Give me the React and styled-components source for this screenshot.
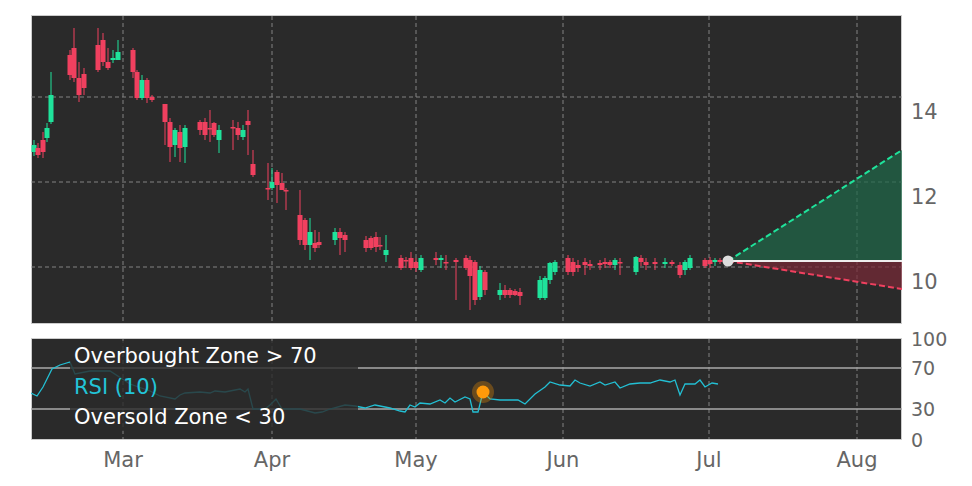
import React from 'react';
import styled, { createGlobalStyle } from 'styled-components';

const Global = createGlobalStyle`
  body { margin: 0; background: #fff; font-family: "DejaVu Sans", sans-serif; }
`;

const Page = styled.div`
  width: 972px;
  height: 486px;
  padding: 15px 0 0 31px;
  box-sizing: border-box;
  display: flex;
  flex-direction: column;
  gap: 14px;
`;

const Row = styled.div`
  display: flex;
  height: ${(p) => p.h}px;
`;

const Panel = styled.svg`
  width: 871px;
  height: ${(p) => p.h}px;
  display: block;
  flex: none;
`;

const Axis = styled.div`
  position: relative;
  flex: 1;
`;

const Tick = styled.span`
  position: absolute;
  left: 9px;
  transform: translateY(-50%);
  font-size: ${(p) => p.size}px;
  color: #666;
  line-height: 1;
`;

const Months = styled.div`
  position: relative;
  height: 40px;
  margin-top: -6px;
`;

const Month = styled.span`
  position: absolute;
  top: 0;
  transform: translateX(-50%);
  font-size: 21px;
  color: #666;
`;

const GREEN = '#1fe39b';
const RED = '#f0405f';
const vx = [123, 272, 416, 563, 709, 857];

// [x, open, close, high, low] in page y coords
const candles = [
  [34, 152, 145, 140, 156], [38, 148, 155, 143, 158], [43, 140, 152, 132, 158], [47, 138, 128, 123, 142], [51, 122, 95, 72, 124],
  [70, 55, 75, 50, 80], [74, 48, 78, 28, 82], [79, 78, 95, 62, 102], [84, 74, 88, 68, 95],
  [98, 45, 70, 28, 72], [103, 40, 62, 33, 66], [108, 62, 68, 48, 70], [113, 60, 58, 50, 63], [118, 60, 52, 40, 60],
  [133, 50, 72, 48, 78], [137, 72, 98, 70, 100], [142, 98, 80, 75, 100], [147, 80, 98, 78, 103], [152, 97, 100, 95, 102],
  [165, 104, 122, 104, 145], [170, 122, 147, 118, 162], [175, 145, 130, 128, 157], [180, 132, 148, 125, 162], [185, 147, 128, 125, 163],
  [200, 122, 130, 120, 135], [205, 122, 135, 118, 140], [210, 128, 128, 110, 142], [214, 123, 135, 122, 137], [219, 140, 130, 125, 153],
  [233, 127, 127, 120, 150], [238, 128, 135, 122, 140], [243, 137, 130, 125, 140], [248, 121, 125, 110, 155],
  [253, 164, 175, 150, 177],
  [268, 188, 188, 163, 200], [272, 188, 182, 168, 190], [277, 172, 185, 170, 203], [282, 183, 190, 173, 190], [286, 190, 190, 188, 210],
  [300, 215, 240, 190, 245], [305, 220, 245, 218, 250], [310, 245, 232, 218, 260], [315, 243, 248, 230, 252], [319, 242, 245, 232, 248],
  [335, 240, 232, 228, 245], [340, 232, 238, 228, 255], [345, 235, 240, 232, 252],
  [366, 240, 248, 236, 252], [371, 238, 248, 236, 250], [376, 237, 247, 232, 252], [380, 245, 246, 237, 250],
  [386, 255, 250, 235, 262], [401, 258, 268, 255, 270], [406, 260, 260, 257, 268], [411, 258, 268, 252, 270], [416, 262, 268, 258, 272], [421, 270, 258, 255, 272],
  [436, 258, 260, 252, 265], [441, 260, 258, 255, 268], [446, 262, 262, 255, 270], [456, 260, 262, 258, 300],
  [466, 258, 268, 255, 270], [470, 260, 276, 256, 310], [475, 262, 300, 260, 305], [480, 297, 270, 266, 300], [485, 272, 290, 270, 295],
  [500, 295, 290, 283, 300], [505, 290, 295, 285, 298], [510, 290, 295, 288, 298], [515, 291, 295, 289, 296], [520, 292, 296, 288, 305],
  [540, 298, 280, 276, 300], [545, 298, 278, 276, 300], [550, 280, 263, 262, 284], [555, 272, 262, 260, 275],
  [568, 258, 272, 255, 275], [573, 262, 272, 258, 276], [578, 265, 268, 260, 272], [585, 262, 265, 258, 275], [590, 264, 266, 260, 270],
  [600, 263, 265, 260, 270], [605, 262, 264, 258, 268], [610, 262, 265, 260, 268], [615, 265, 260, 258, 270], [620, 262, 263, 258, 275],
  [636, 272, 257, 256, 275], [641, 258, 262, 255, 266], [646, 262, 265, 258, 270], [655, 262, 264, 258, 270], [665, 264, 262, 258, 268],
  [672, 262, 264, 260, 266], [680, 265, 275, 262, 278], [685, 270, 262, 260, 275], [690, 268, 258, 255, 270],
  [705, 260, 266, 258, 268], [710, 260, 264, 257, 268], [715, 262, 260, 258, 266], [720, 260, 262, 258, 264],
];

const rsi = [[31,394],[37,397],[43,388],[52,370],[60,366],[70,363],[75,375],[90,372],[110,372],[130,385],[150,392],[160,397],[175,400],[180,396],[185,394],[200,393],[210,394],[215,392],[225,393],[240,390],[245,393],[248,390],[253,410],[265,410],[270,406],[276,400],[282,410],[300,410],[315,414],[322,413],[330,410],[345,406],[355,407],[365,409],[375,406],[390,409],[400,412],[405,413],[410,406],[415,408],[420,404],[430,405],[440,401],[445,404],[450,399],[455,403],[465,398],[470,400],[473,413],[478,413],[483,393],[490,400],[500,401],[518,401],[525,405],[535,395],[545,388],[550,383],[560,386],[570,387],[575,381],[580,384],[590,387],[600,383],[605,386],[615,383],[620,389],[630,385],[640,384],[650,384],[660,381],[670,383],[675,381],[680,396],[685,385],[695,385],[700,381],[705,388],[712,384],[718,385]];

const Grid = ({ top, bottom, hs }) => (
  <g stroke="#999" strokeWidth="1" strokeDasharray="4 3" opacity="0.8">
    {vx.map((x) => <line key={x} x1={x} x2={x} y1={top} y2={bottom} />)}
    {hs.map((y) => <line key={y} x1={31} x2={902} y1={y} y2={y} />)}
  </g>
);

export default function App() {
  return (
    <Page>
      <Global />
      <Row h={309}>
        <Panel h={309} viewBox="31 15 871 309">
          <rect x="31.5" y="15.5" width="870" height="308" fill="#2a2a2a" stroke="#ccc" />
          <Grid top={16} bottom={323} hs={[97, 182, 267]} />
          <polygon points="728,261 902,150 902,261" fill="#1f6a4a" opacity="0.7" />
          <polygon points="728,261 902,289 902,261" fill="#7a2a38" opacity="0.7" />
          <line x1="728" y1="261" x2="902" y2="150" stroke={GREEN} strokeWidth="2" strokeDasharray="6 3" />
          <line x1="728" y1="261" x2="902" y2="289" stroke={RED} strokeWidth="2" strokeDasharray="6 3" />
          <line x1="728" y1="261" x2="902" y2="261" stroke="#eee" strokeWidth="2" />
          {candles.map(([x, o, c, h, l]) => {
            const col = c < o ? GREEN : RED;
            return (
              <g key={x}>
                <line x1={x} x2={x} y1={h} y2={l} stroke={col} strokeWidth="1" />
                <rect x={x - 2.5} y={Math.min(o, c)} width="5" height={Math.max(1.5, Math.abs(o - c))} fill={col} />
              </g>
            );
          })}
          <circle cx="728" cy="261" r="5.5" fill="#ddd" />
        </Panel>
        <Axis>
          <Tick size={21} style={{ top: 97 }}>14</Tick>
          <Tick size={21} style={{ top: 182 }}>12</Tick>
          <Tick size={21} style={{ top: 267 }}>10</Tick>
        </Axis>
      </Row>
      <Row h={102}>
        <Panel h={102} viewBox="31 339 871 102">
          <rect x="31.5" y="339.5" width="870" height="101" fill="#2a2a2a" stroke="#ccc" />
          <Grid top={340} bottom={440} hs={[]} />
          <line x1="31" x2="902" y1="369" y2="369" stroke="#aaa" strokeWidth="1.5" />
          <line x1="31" x2="902" y1="410" y2="410" stroke="#aaa" strokeWidth="1.5" />
          <polyline points={rsi.map((p) => p.join(',')).join(' ')} fill="none" stroke="#23bfd3" strokeWidth="1.3" />
          <rect x="70" y="342" width="288" height="90" fill="#2a2a2a" opacity="0.8" />
          <circle cx="483" cy="393" r="11" fill="#ff9900" opacity="0.3" />
          <circle cx="483" cy="393" r="6.5" fill="#ff9a0a" />
          <g fontFamily="DejaVu Sans, sans-serif" fontSize="21">
            <text x="74" y="364" fill="#fff">Overbought Zone &gt; 70</text>
            <text x="74" y="395" fill="#23c4d8">RSI (10)</text>
            <text x="74" y="425" fill="#fff">Oversold Zone &lt; 30</text>
          </g>
        </Panel>
        <Axis>
          <Tick size={19} style={{ top: 1 }}>100</Tick>
          <Tick size={19} style={{ top: 30 }}>70</Tick>
          <Tick size={19} style={{ top: 71 }}>30</Tick>
          <Tick size={19} style={{ top: 102 }}>0</Tick>
        </Axis>
      </Row>
      <Months>
        {[['Mar', 123], ['Apr', 272], ['May', 416], ['Jun', 563], ['Jul', 709], ['Aug', 857]].map(([m, x]) => (
          <Month key={m} style={{ left: x - 31 }}>{m}</Month>
        ))}
      </Months>
    </Page>
  );
}
